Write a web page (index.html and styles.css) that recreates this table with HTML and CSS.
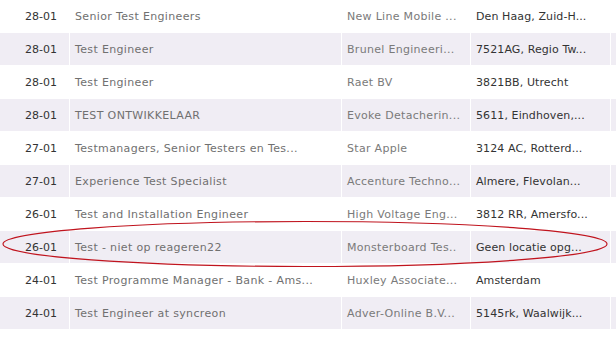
FILE: index.html
```html
<!DOCTYPE html>
<html>
<head>
<meta charset="utf-8">
<link rel="stylesheet" href="styles.css">
</head>
<body>
<div class="list">
  <div class="row"><div class="date">28-01</div><div class="title">Senior Test Engineers</div><div class="company">New Line Mobile ...</div><div class="loc">Den Haag, Zuid-H...</div><div class="extra"></div></div>
  <div class="row alt"><div class="date">28-01</div><div class="title">Test Engineer</div><div class="company">Brunel Engineeri...</div><div class="loc">7521AG, Regio Tw...</div><div class="extra"></div></div>
  <div class="row"><div class="date">28-01</div><div class="title">Test Engineer</div><div class="company">Raet BV</div><div class="loc">3821BB, Utrecht</div><div class="extra"></div></div>
  <div class="row alt"><div class="date">28-01</div><div class="title">TEST ONTWIKKELAAR</div><div class="company">Evoke Detacherin...</div><div class="loc">5611, Eindhoven,...</div><div class="extra"></div></div>
  <div class="row"><div class="date">27-01</div><div class="title">Testmanagers, Senior Testers en Tes...</div><div class="company">Star Apple</div><div class="loc">3124 AC, Rotterd...</div><div class="extra"></div></div>
  <div class="row alt"><div class="date">27-01</div><div class="title">Experience Test Specialist</div><div class="company">Accenture Techno...</div><div class="loc">Almere, Flevolan...</div><div class="extra"></div></div>
  <div class="row"><div class="date">26-01</div><div class="title">Test and Installation Engineer</div><div class="company">High Voltage Eng...</div><div class="loc">3812 RR, Amersfo...</div><div class="extra"></div></div>
  <div class="row alt"><div class="date">26-01</div><div class="title">Test - niet op reageren22</div><div class="company">Monsterboard Tes..</div><div class="loc">Geen locatie opg...</div><div class="extra"></div></div>
  <div class="row"><div class="date">24-01</div><div class="title">Test Programme Manager - Bank - Ams...</div><div class="company">Huxley Associate...</div><div class="loc">Amsterdam</div><div class="extra"></div></div>
  <div class="row alt"><div class="date">24-01</div><div class="title">Test Engineer at syncreon</div><div class="company">Adver-Online B.V...</div><div class="loc">5145rk, Waalwijk...</div><div class="extra"></div></div>
</div>
<svg class="circle" width="616" height="342" viewBox="0 0 616 342">
  <ellipse cx="305" cy="244" rx="302" ry="22.5" fill="none" stroke="#c0141e" stroke-width="1.2"/>
</svg>
</body>
</html>
```

FILE: styles.css
```css
html, body {
  margin: 0;
  padding: 0;
  background: #ffffff;
}
body {
  position: relative;
  width: 616px;
  height: 342px;
  overflow: hidden;
  font-family: "DejaVu Sans", Verdana, sans-serif;
  font-size: 11px;
}
.list {
  display: flex;
  flex-direction: column;
  gap: 1px;
}
.row {
  display: grid;
  grid-template-columns: 69px 271px 128px 139px 20px;
  column-gap: 1px;
  height: 32px;
}
.row > div {
  display: flex;
  align-items: center;
  white-space: nowrap;
  overflow: hidden;
}
.row.alt > div {
  background: #f0edf4;
}
.date {
  padding-left: 25px;
  color: #333333;
}
.title {
  padding-left: 5px;
  color: #707070;
  letter-spacing: 0.35px;
}
.company {
  padding-left: 5px;
  color: #7a7a7a;
  letter-spacing: 0.3px;
}
.loc {
  padding-left: 5px;
  color: #333333;
  letter-spacing: 0.1px;
}
.circle {
  position: absolute;
  left: 0;
  top: 0;
  pointer-events: none;
}
```
